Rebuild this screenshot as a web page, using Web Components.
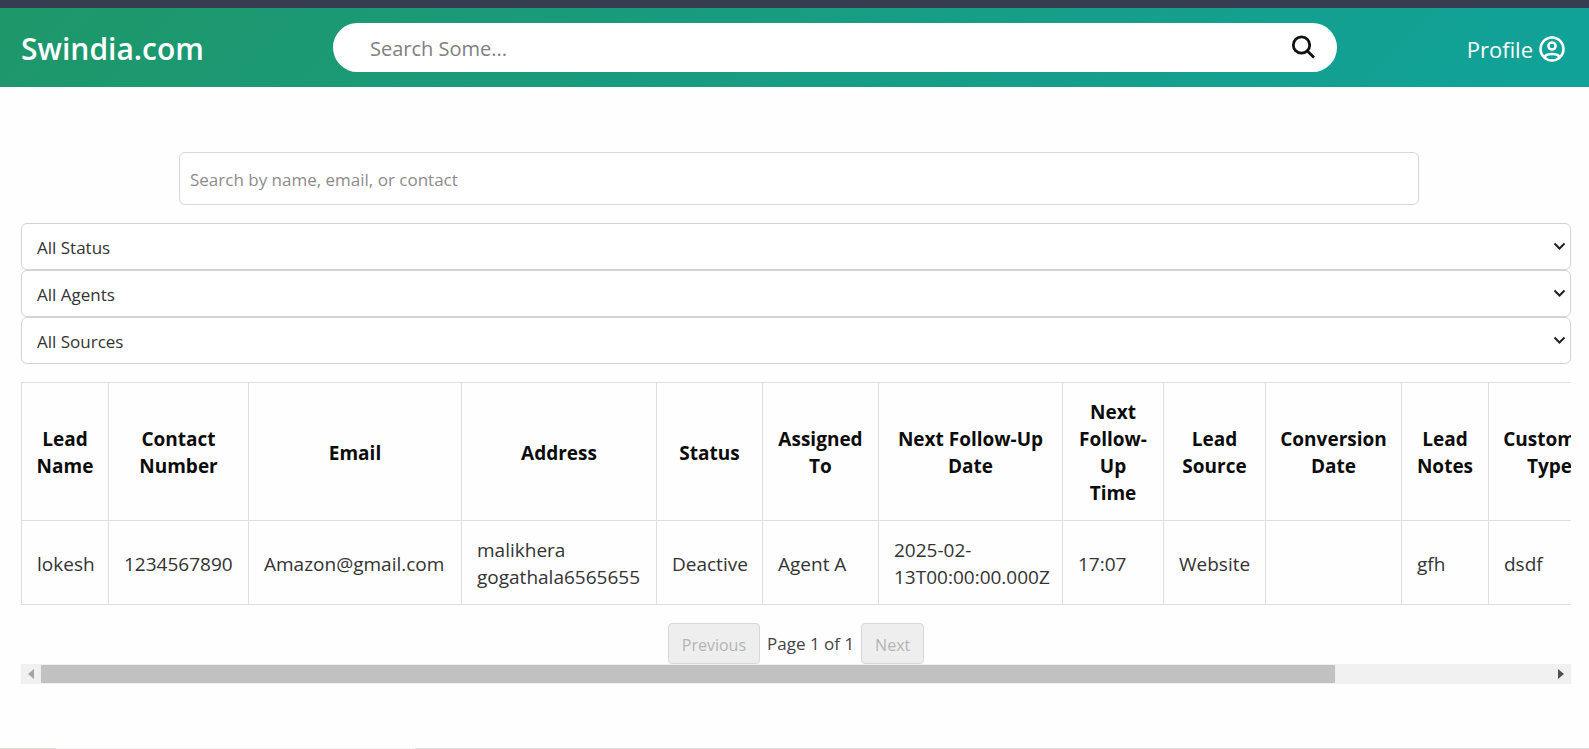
<!DOCTYPE html>
<html lang="en">
<head>
<meta charset="utf-8">
<title>Swindia.com</title>
<style>
  body { margin: 0; background: #fefefe; color: #333; font-family: "Open Sans", "Noto Sans", sans-serif; }
</style>
</head>
<body>
<crm-app></crm-app>
<script>
const define = (name, html, setup) => {
  const template = document.createElement("template");
  template.innerHTML = "<style>*{box-sizing:border-box}input,select,button{font-family:inherit}</style>" + html;
  customElements.define(name, class extends HTMLElement {
    constructor() {
      super();
      this.attachShadow({ mode: "open" }).append(template.content.cloneNode(true));
    }
    connectedCallback() { if (setup) setup(this, this.shadowRoot); }
  });
};

define("site-header", `
<style>
  :host { display: block; border-top: 8px solid #353c4f; }
  header { display: grid; grid-template-columns: minmax(0, 312px) 65% 1fr; align-items: center; height: 79px; padding: 0 24px 0 21px; background: linear-gradient(135deg, #1e9769, #10a29a); color: #fff; }
  a { padding-top: 3px; color: inherit; text-decoration: none; }
  .brand { font-size: 30px; font-weight: 600; line-height: 40px; }
  form { display: flex; align-items: center; height: 49px; padding: 0 20px 0 37px; border-radius: 25px; background: #fff; }
  input { flex: 1; min-width: 0; padding: 2px 0 0; border: 0; outline: 0; background: none; font-size: 20px; }
  input::placeholder { color: #808080; }
  button { display: flex; padding: 0; border: 0; background: none; color: #111; }
  .profile { display: flex; align-items: center; justify-content: flex-end; gap: 6px; font-size: 22px; line-height: 30px; }
</style>
<header>
  <a class="brand" href="#">Swindia.com</a>
  <form role="search">
    <input type="search" aria-label="Search" placeholder="Search Some...">
    <button type="button" aria-label="Search"><svg width="27" height="27" viewBox="0 0 27 27" fill="none" stroke="currentColor" stroke-width="2.8"><circle cx="11.5" cy="11" r="8.2"/><path d="M17.4 17 24 23.4"/></svg></button>
  </form>
  <a class="profile" href="#">Profile
    <svg width="26" height="26" viewBox="0 0 26 26" fill="none" stroke="currentColor" stroke-width="2.5"><circle cx="13" cy="13" r="11.5"/><circle cx="13" cy="10" r="3.6"/><path d="M5.4 21.2C7 16.8 19 16.8 20.6 21.2"/></svg>
  </a>
</header>`);

define("lead-search", `
<style>
  :host { display: block; width: 80%; }
  input { display: block; width: 100%; height: 53px; padding: 2px 10px 0; border: 1px solid #d8d8d8; border-radius: 6px; background: #fff; font-size: 17px; outline: 0; }
  input::placeholder { color: #8c8c8c; }
</style>
<input type="text" aria-label="Search leads" placeholder="Search by name, email, or contact">`);

define("filter-select", `
<style>
  :host { display: grid; align-items: center; }
  select { grid-area: 1 / 1; appearance: none; width: 100%; height: 47px; padding: 2px 30px 0 15px; border: 1px solid #d3d3d3; border-radius: 6px; background: #fff; color: #333; font-size: 17px; }
  svg { grid-area: 1 / 1; justify-self: end; margin-right: 5px; pointer-events: none; }
</style>
<select><option></option></select>
<svg width="13" height="9" viewBox="0 0 13 9" fill="none" stroke="#222" stroke-width="2"><path d="M1.5 1.5 6.5 6.5 11.5 1.5"/></svg>`,
(host, root) => {
  root.querySelector("option").textContent = host.getAttribute("label");
  root.querySelector("select").setAttribute("aria-label", host.getAttribute("label"));
});

define("leads-table", `
<style>
  :host { display: block; overflow: hidden; }
  table { width: 1810px; table-layout: fixed; border-collapse: collapse; font-size: 19px; line-height: 27px; }
  th, td { padding: 15px 15px 12px; border: 1px solid #dfdfdf; }
  th { height: 138px; padding: 15px 14px 12px; color: #0c0c0c; font-weight: 700; }
  td { height: 84px; text-align: left; white-space: nowrap; }
</style>
<table>
  <colgroup>
    <col width="87"><col width="140"><col width="213"><col width="195"><col width="106"><col width="116">
    <col width="184"><col width="101"><col width="102"><col width="136"><col width="87"><col width="122"><col>
  </colgroup>
  <thead><tr>
    <th>Lead Name</th><th>Contact Number</th><th>Email</th><th>Address</th><th>Status</th><th>Assigned To</th>
    <th>Next Follow-Up Date</th><th>Next Follow-Up Time</th><th>Lead Source</th><th>Conversion Date</th><th>Lead Notes</th><th>Customer Type</th><th></th>
  </tr></thead>
  <tbody><tr>
    <td>lokesh</td><td>1234567890</td><td>Amazon@gmail.com</td><td>malikhera<br>gogathala6565655</td><td>Deactive</td><td>Agent A</td>
    <td>2025-02-<br>13T00:00:00.000Z</td><td>17:07</td><td>Website</td><td></td><td>gfh</td><td>dsdf</td><td></td>
  </tr></tbody>
</table>`);

define("page-nav", `
<style>
  :host { display: flex; justify-content: center; align-items: center; gap: 7px; font-size: 17px; color: #444; }
  button { height: 41px; padding: 2px 13px 0; border: 1px solid #d8d8d8; border-radius: 4px; background: #eee; color: #b4b4b4; font-size: 16px; }
</style>
<button disabled>Previous</button><span>Page 1 of 1</span><button disabled>Next</button>`);

define("scroll-bar", `
<style>
  :host { display: flex; height: 20px; background: #f0f0f0; }
  button { display: flex; align-items: center; justify-content: center; width: 20px; padding: 0; border: 0; background: none; color: #a3a3a3; }
  button:last-child { color: #505050; }
  .track { flex: 1; padding: 1px 0; }
  .thumb { width: calc(100% * 6 / 7); height: 100%; background: #c1c1c1; }
</style>
<button aria-label="Scroll left"><svg width="6" height="10" viewBox="0 0 6 10" fill="currentColor"><path d="M6 0V10L0 5Z"/></svg></button>
<div class="track"><div class="thumb"></div></div>
<button aria-label="Scroll right"><svg width="6" height="10" viewBox="0 0 6 10" fill="currentColor"><path d="M0 0V10L6 5Z"/></svg></button>`,
(host, root) => {
  const table = host.parentNode.querySelector("leads-table");
  const thumb = root.querySelector(".thumb");
  const [left, right] = root.querySelectorAll("button");
  const move = (by) => {
    table.scrollLeft += by;
    thumb.style.marginLeft = table.scrollLeft / table.scrollWidth * 100 + "%";
  };
  left.onclick = () => move(-40);
  right.onclick = () => move(40);
});

define("crm-app", `
<style>
  :host { display: flex; flex-direction: column; min-height: 100vh; }
  main { display: flex; flex: 1; flex-direction: column; padding: 65px 18px 0 21px; }
  lead-search { align-self: center; margin: 0 0 18px 6px; }
  leads-table { margin: 18px 0; }
  footer { height: 1px; background: linear-gradient(90deg, #dadad4 56px, #f4f4f2 56px 415px, #dfe0dc 415px); }
</style>
<site-header></site-header>
<main>
  <lead-search></lead-search>
  <filter-select label="All Status"></filter-select>
  <filter-select label="All Agents"></filter-select>
  <filter-select label="All Sources"></filter-select>
  <leads-table></leads-table>
  <page-nav></page-nav>
  <scroll-bar></scroll-bar>
</main>
<footer></footer>`);
</script>
</body>
</html>
